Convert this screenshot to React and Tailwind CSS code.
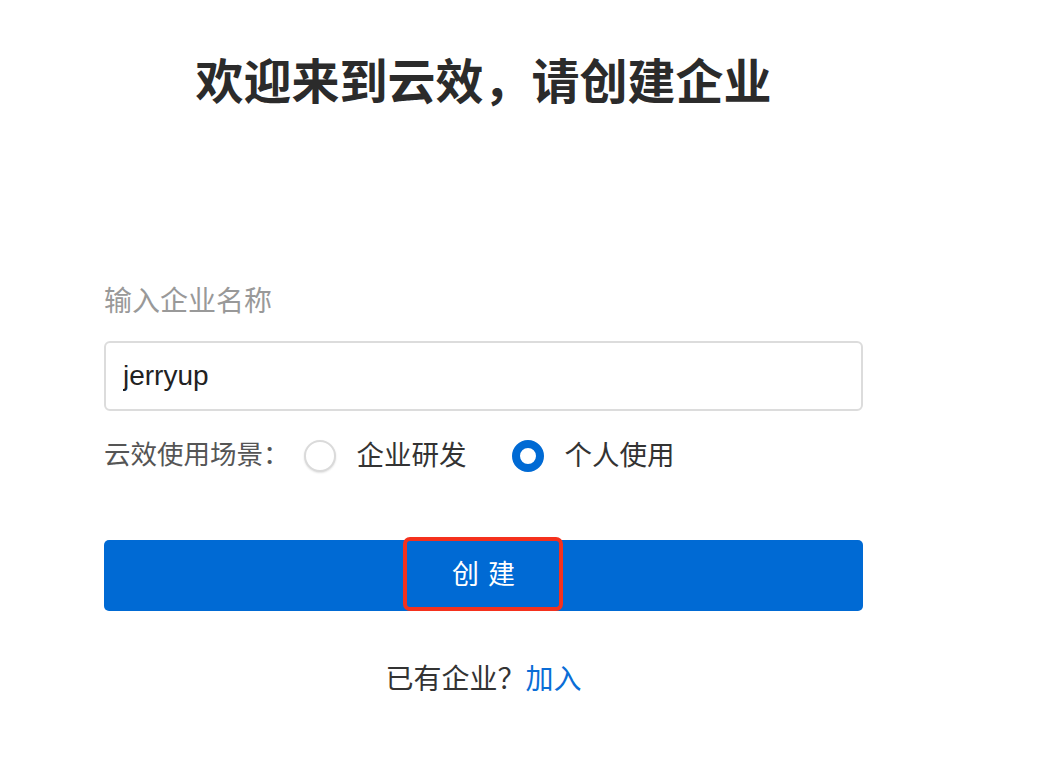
import React, { useState } from 'react';

const font = { fontFamily: '"Liberation Sans", "Noto Sans CJK SC", sans-serif' };

function Radio({ checked, label, onClick }) {
    return (
        <button type="button" onClick={onClick} className="flex items-center gap-[21px]">
            {checked ? (
                <span className="w-[32px] h-[32px] rounded-full border-[8px] border-[#006ad4] bg-white" />
            ) : (
                <span className="w-[32px] h-[32px] rounded-full border-2 border-[#dadada] bg-white shadow-[0_1px_2px_rgba(0,0,0,0.12)]" />
            )}
            <span className="text-[27.5px] text-[#333]">{label}</span>
        </button>
    );
}

export default function App() {
    const [name, setName] = useState('jerryup');
    const [scene, setScene] = useState('personal');

    return (
        <div className="min-h-[774px] bg-white" style={font}>
            <div className="ml-[104px] w-[759px] flex flex-col">
                {/* Title */}
                <h1 className="mt-[50px] text-center text-[48px] leading-[66px] font-bold text-[#2b2b2b]">
                    欢迎来到云效，请创建企业
                </h1>

                {/* Form */}
                <label className="mt-[168px] text-[28px] leading-[36px] text-[#999]">输入企业名称</label>
                <input
                    value={name}
                    onChange={e => setName(e.target.value)}
                    className="mt-[21px] h-[70px] w-full rounded-[6px] border-2 border-[#dcdcdc] px-[17px] text-[28px] text-[#222] outline-none"
                />

                <div className="mt-[29px] flex items-center h-[32px]">
                    <span className="text-[26.5px] text-[#555]">云效使用场景：</span>
                    <div className="ml-[14px] flex items-center gap-[45px]">
                        <Radio checked={scene === 'team'} label="企业研发" onClick={() => setScene('team')} />
                        <Radio checked={scene === 'personal'} label="个人使用" onClick={() => setScene('personal')} />
                    </div>
                </div>

                <div className="relative mt-[68px]">
                    <button className="w-full h-[71px] rounded-[5px] bg-[#006ad4] text-white text-[27px] tracking-[9px] pl-[9px]">
                        创建
                    </button>
                    {/* highlight annotation */}
                    <div className="absolute left-[299px] top-[-3px] w-[160px] h-[74px] rounded-[7px] border-[4px] border-[#f5311d] pointer-events-none" />
                </div>

                <p className="mt-[48px] text-center text-[28px] text-[#333]">
                    已有企业？<a href="#" className="text-[#0a6dd6]">加入</a>
                </p>
            </div>
        </div>
    );
}
